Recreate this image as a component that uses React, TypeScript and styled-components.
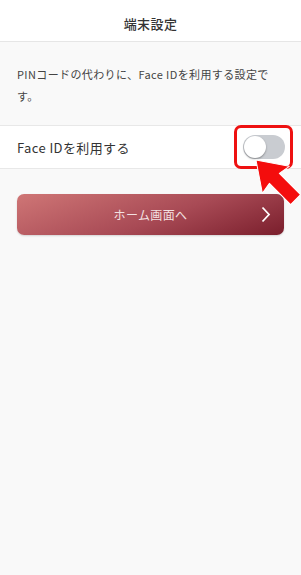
import React from 'react';
import styled, {createGlobalStyle} from "styled-components";

const Global = createGlobalStyle`
  html, body {
    margin: 0;
    padding: 0;
    background: #f9f9f9;
    font-family: "Noto Sans CJK JP", "Noto Sans", sans-serif;
  }
`

const Page = styled.div`
  width: 301px;
  min-height: 575px;
  background: #f9f9f9;
`

const Header = styled.header`
  height: 42px;
  background: #ffffff;
  border-bottom: 1px solid #e6e6e6;
  display: flex;
  align-items: center;
  justify-content: center;
  box-sizing: border-box;
  padding-top: 5px;
  font-size: 13px;
  font-weight: 500;
  letter-spacing: 0.03em;
  color: #333;
`

const Description = styled.p`
  margin: 0;
  padding: 21px 17px 18px;
  font-size: 11px;
  line-height: 22px;
  letter-spacing: 0.035em;
  color: #444;
`

const SettingRow = styled.div`
  height: 42px;
  background: #ffffff;
  border-top: 1px solid #e8e8e8;
  border-bottom: 1px solid #e8e8e8;
  display: flex;
  align-items: center;
  justify-content: space-between;
  padding: 0 16px 0 17px;
  font-size: 13px;
  letter-spacing: 0.03em;
  color: #333;
`

const ToggleWrap = styled.div`
  position: relative;
  display: flex;
  align-items: center;
`

const Track = styled.div`
  width: 42px;
  height: 24px;
  box-sizing: border-box;
  padding: 1px;
  border-radius: 12px;
  background: #c9ccd1;
  display: flex;
  align-items: center;
`

const Knob = styled.div`
  width: 22px;
  height: 22px;
  border-radius: 50%;
  background: #fff;
  box-shadow: 0 1px 2px rgba(0, 0, 0, 0.35);
`

const Highlight = styled.div`
  position: absolute;
  left: -9px;
  right: -8px;
  top: -10px;
  bottom: -10px;
  border: 3px solid #ee1111;
  border-radius: 7px;
  pointer-events: none;
`

const Pointer = styled.svg`
  position: absolute;
  left: 13px;
  top: 25px;
  overflow: visible;
  pointer-events: none;
`

const ButtonArea = styled.div`
  padding: 25px 17px;
`

const HomeButton = styled.button`
  width: 100%;
  height: 41px;
  border: none;
  border-radius: 7px;
  padding: 0 13px;
  background: linear-gradient(160deg, #cf7676 0%, #a84a55 55%, #7a1e2c 100%);
  box-shadow: 0 1px 2px rgba(0, 0, 0, 0.15);
  display: grid;
  grid-template-columns: 1fr auto 1fr;
  align-items: center;
  font-family: inherit;
  font-size: 12px;
  letter-spacing: 0.03em;
  color: #f3e1e1;
`

const Chevron = styled.svg`
  justify-self: end;
`

export default function App() {
    return (
        <>
            <Global/>
            <Page>
                <Header>端末設定</Header>
                <Description>PINコードの代わりに、Face IDを利用する設定です。</Description>
                <SettingRow>
                    <span>Face IDを利用する</span>
                    <ToggleWrap>
                        <Track><Knob/></Track>
                        <Highlight/>
                        <Pointer width="40" height="40" viewBox="0 0 40 40">
                            <g transform="rotate(-45 0 0)">
                                <polygon
                                    points="0,0 19,28 7,26 7,56 -7,56 -7,26 -19,28"
                                    fill="#f40d0d"
                                    stroke="#ffffff"
                                    strokeWidth="1"
                                    strokeLinejoin="round"
                                />
                            </g>
                        </Pointer>
                    </ToggleWrap>
                </SettingRow>
                <ButtonArea>
                    <HomeButton>
                        <span/>
                        <span>ホーム画面へ</span>
                        <Chevron width="10" height="17" viewBox="0 0 10 17">
                            <polyline points="1.5,1.5 8,8.5 1.5,15.5" fill="none" stroke="#fff" strokeWidth="1.8"/>
                        </Chevron>
                    </HomeButton>
                </ButtonArea>
            </Page>
        </>
    )
}
